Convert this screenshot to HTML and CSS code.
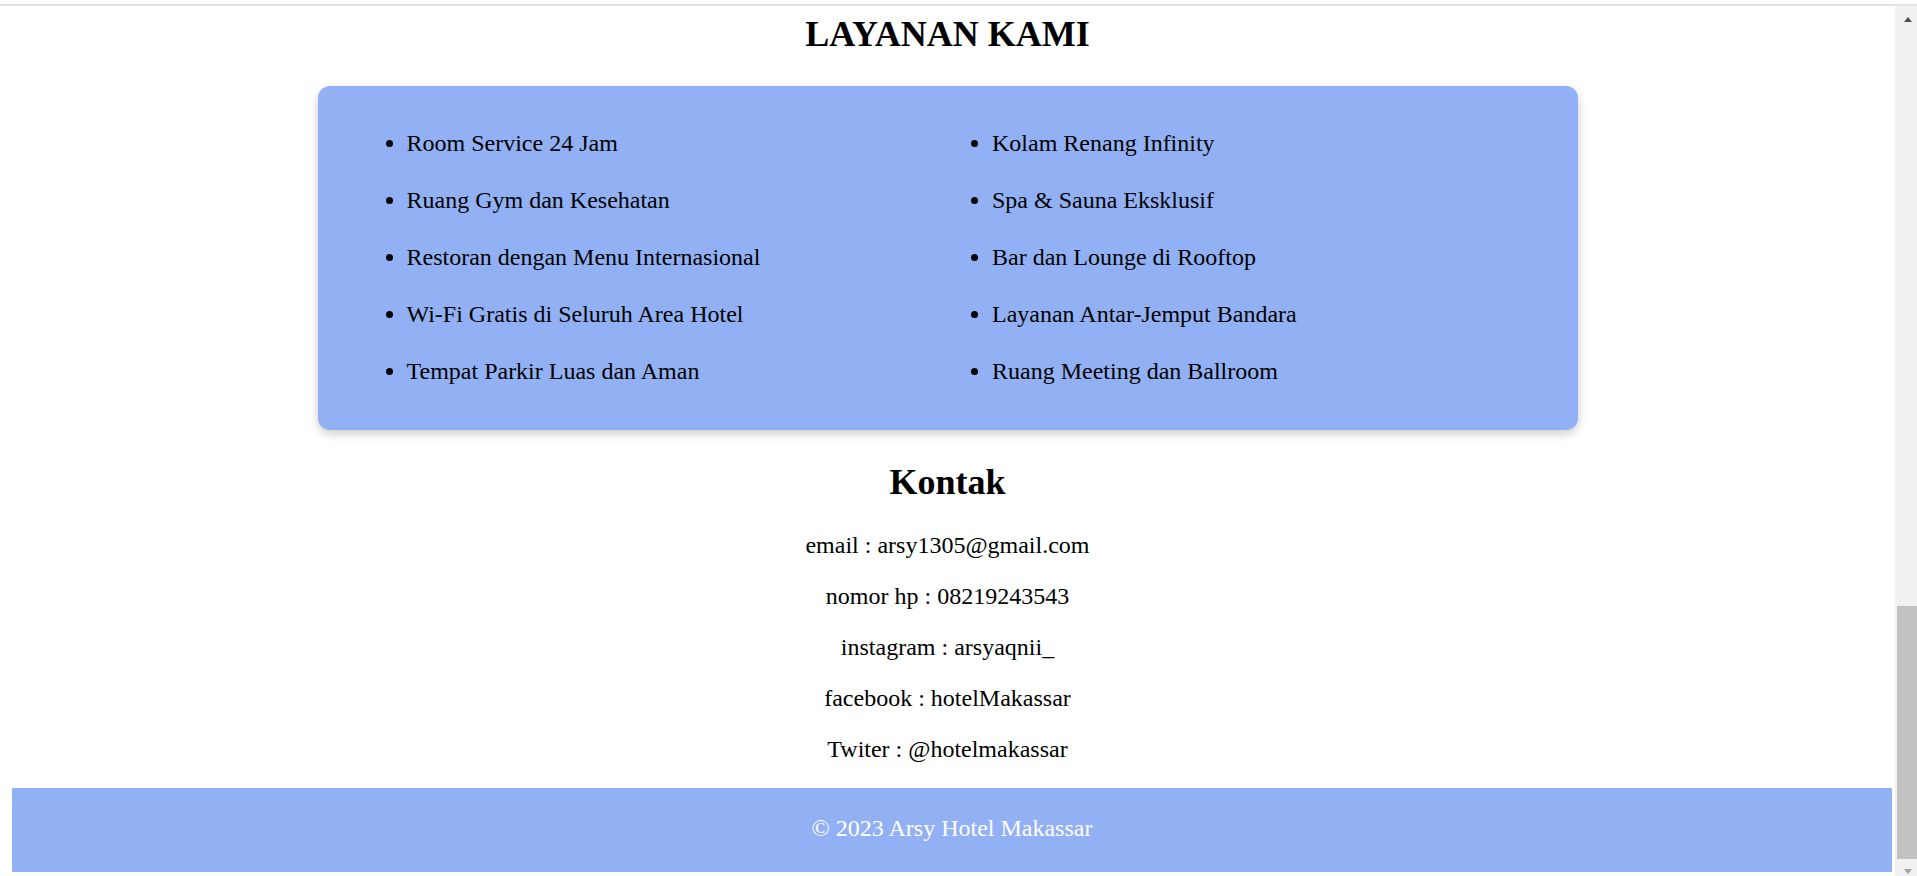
FILE: index.html
```html
<!DOCTYPE html>
<html lang="id">
<head>
<meta charset="utf-8">
<title>Arsy Hotel Makassar</title>
<link rel="stylesheet" href="styles.css">
</head>
<body>
<div class="edge"></div>
<div class="window">
  <main class="page">
    <section class="layanan">
      <h2 class="title">LAYANAN KAMI</h2>
      <div class="services">
        <ul class="service-list">
          <li>Room Service 24 Jam</li>
          <li>Kolam Renang Infinity</li>
          <li>Ruang Gym dan Kesehatan</li>
          <li>Spa &amp; Sauna Eksklusif</li>
          <li>Restoran dengan Menu Internasional</li>
          <li>Bar dan Lounge di Rooftop</li>
          <li>Wi-Fi Gratis di Seluruh Area Hotel</li>
          <li>Layanan Antar-Jemput Bandara</li>
          <li>Tempat Parkir Luas dan Aman</li>
          <li>Ruang Meeting dan Ballroom</li>
        </ul>
      </div>
    </section>
    <section class="kontak">
      <h2 class="kontak-title">Kontak</h2>
      <div class="contact-list">
        <p>email : arsy1305@gmail.com</p>
        <p>nomor hp : 08219243543</p>
        <p>instagram : arsyaqnii_</p>
        <p>facebook : hotelMakassar</p>
        <p>Twiter : @hotelmakassar</p>
      </div>
    </section>
    <footer class="footer">
      <p>&copy; 2023 Arsy Hotel Makassar</p>
    </footer>
  </main>
  <div class="scrollbar">
    <div class="sb-up"><span class="arrow-up"></span></div>
    <div class="sb-track"></div>
    <div class="sb-thumb"></div>
    <div class="sb-down"><span class="arrow-down"></span></div>
  </div>
</div>
</body>
</html>
```
FILE: styles.css
```css
html, body {
  margin: 0;
  padding: 0;
  background: #ffffff;
}

body {
  width: 1917px;
  height: 876px;
  overflow: hidden;
  font-family: "Liberation Serif", "Times New Roman", serif;
  font-size: 24px;
  color: #000000;
  padding-top: 4px;
  box-sizing: border-box;
}

.edge {
  height: 2px;
  background: #e3e3e3;
}

.window {
  display: flex;
  height: 870px;
  overflow: hidden;
}

.page {
  flex: 0 0 1895px;
  box-sizing: border-box;
  padding: 8px 12px 0 12px;
  display: flex;
  flex-direction: column;
}

.title {
  margin: 0 0 32px 0;
  font-size: 36px;
  line-height: 40px;
  font-weight: bold;
  text-align: center;
}

.services {
  width: 1260px;
  margin: 0 auto;
  box-sizing: border-box;
  padding: 44px 30px 45px 29px;
  background: #92b1f4;
  border-radius: 12px;
  box-shadow: 0 4px 10px rgba(0, 0, 0, 0.2);
}

.service-list {
  margin: 0;
  padding: 0 0 0 60px;
  display: grid;
  grid-template-columns: 1fr 1fr;
  column-gap: 30px;
  row-gap: 30px;
  list-style: disc outside;
}

.service-list li {
  line-height: 27px;
}

.kontak {
  display: flex;
  flex-direction: column;
  align-items: center;
  margin-top: 32px;
}

.kontak-title {
  margin: 0;
  font-size: 36px;
  line-height: 40px;
  font-weight: bold;
}

.contact-list {
  margin-top: 30px;
  display: flex;
  flex-direction: column;
  align-items: center;
  gap: 24px;
}

.contact-list p {
  margin: 0;
  line-height: 27px;
}

.footer {
  margin: 25px -9px 0 0;
  padding: 27px 0 30px 0;
  background: #92b1f4;
  color: #ffffff;
  text-align: center;
}

.footer p {
  margin: 0;
  line-height: 27px;
}

.scrollbar {
  flex: 0 0 25px;
  display: flex;
  flex-direction: column;
  background: #f1f1f1;
}

.sb-up {
  height: 26px;
  display: flex;
  justify-content: center;
  align-items: flex-start;
}

.arrow-up {
  margin-top: 11px;
  width: 0;
  height: 0;
  border-left: 4.5px solid transparent;
  border-right: 4.5px solid transparent;
  border-bottom: 5px solid #505050;
}

.sb-track {
  flex: 1;
}

.sb-thumb {
  height: 253px;
  margin: 0 2px;
  background: #c1c1c1;
}

.sb-down {
  height: 17px;
  display: flex;
  justify-content: center;
  align-items: flex-start;
}

.arrow-down {
  margin-top: 10px;
  width: 0;
  height: 0;
  border-left: 4.5px solid transparent;
  border-right: 4.5px solid transparent;
  border-top: 5px solid #a3a3a3;
}
```
